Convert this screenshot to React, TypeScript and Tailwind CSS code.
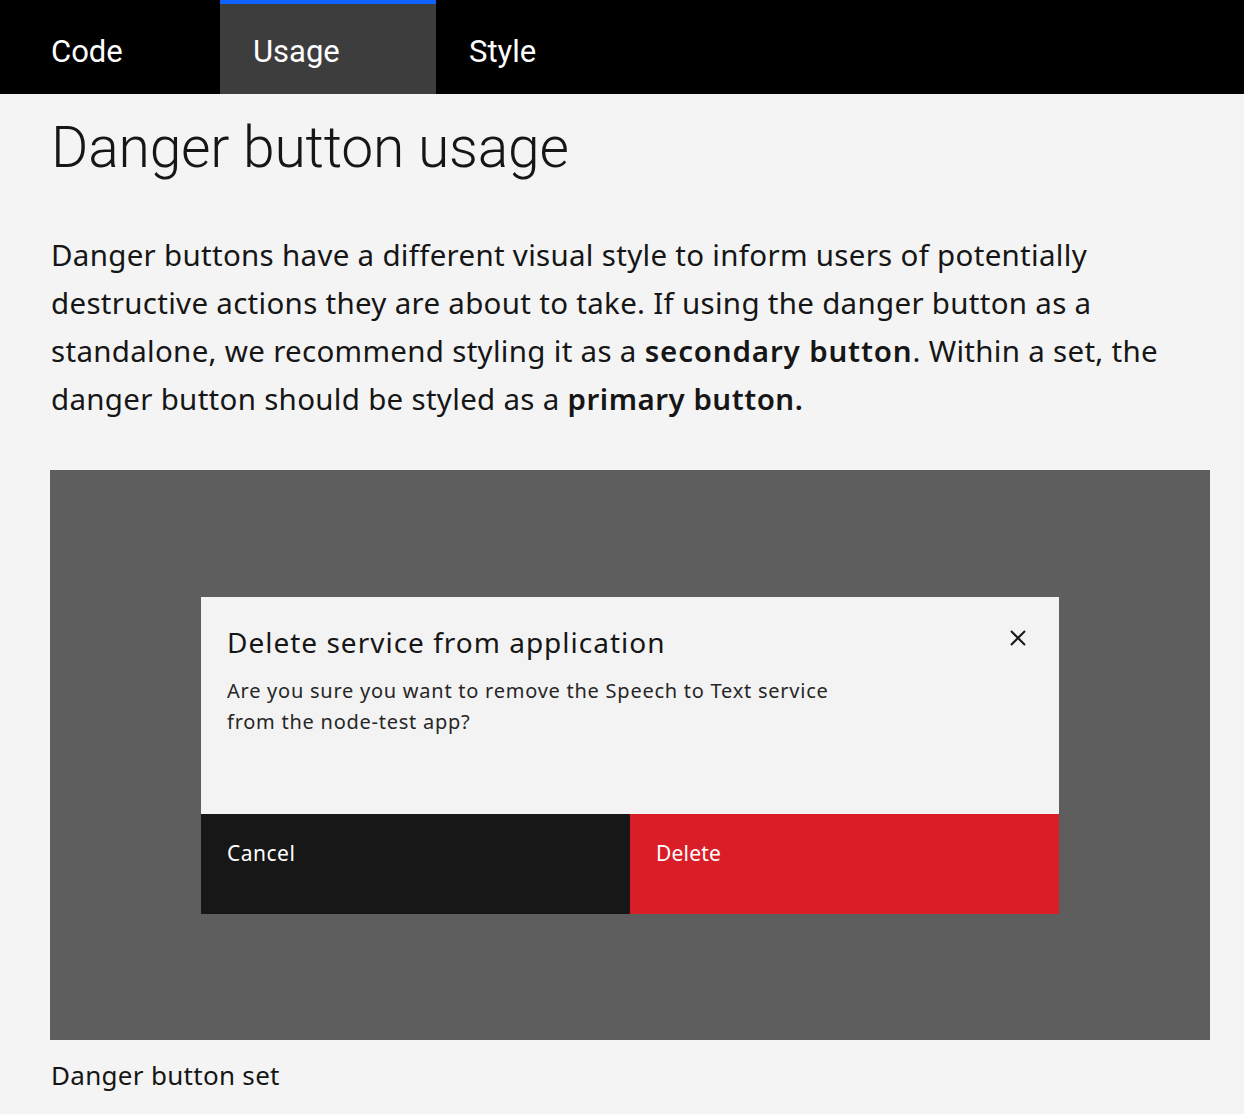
import React from "react";

const R = { fontFamily: "Roboto, 'Noto Sans', sans-serif" };
const N = { fontFamily: "'Noto Sans', Roboto, sans-serif" };

export default function App() {
  return (
    <div className="min-h-[1114px] bg-[#f4f4f4] text-[#161616]" style={R}>
      <nav className="flex h-[94px] bg-black text-white">
        <div className="flex w-[220px] items-center pl-[51px] pt-[10px] text-[31px]">Code</div>
        <div className="flex w-[216px] items-center border-t-[4px] border-[#0f62fe] bg-[#3d3d3d] pl-[33px] pt-[6px] text-[31px]">Usage</div>
        <div className="flex items-center pl-[33px] pt-[10px] text-[31px]">Style</div>
      </nav>
      <main className="pl-[50px] pr-[34px]">
        <h1 className="pl-[1px] pt-[16px] text-[57px] font-light leading-[76px] tracking-[-0.2px]">Danger button usage</h1>
        <p className="mt-[45px] pl-[1px] text-[29.5px] leading-[48px] tracking-[0.3px] whitespace-nowrap" style={N}>
          Danger buttons have a different visual style to inform users of potentially
          <br />
          destructive actions they are about to take. If using the danger button as a
          <br />
          standalone, we recommend styling it as a <b className="font-semibold tracking-[0.85px]">secondary button</b>. Within a set, the
          <br />
          danger button should be styled as a <b className="font-semibold tracking-[0.5px]">primary button.</b>
        </p>
        <div className="mt-[47px] flex h-[570px] w-[1160px] items-center justify-center bg-[#5e5e5e]">
          <div className="flex h-[317px] w-[858px] flex-col bg-[#f3f3f3]" style={N}>
            <div className="relative flex-1 pl-[26px] pt-[25px]">
              <div className="text-[28px] leading-[40px] tracking-[1px]">Delete service from application</div>
              <div className="mt-[13px] text-[20px] leading-[31px] tracking-[0.75px] text-[#262626]">
                Are you sure you want to remove the Speech to Text service
                <br />
                from the node-test app?
              </div>
              <svg className="absolute right-[32px] top-[32px]" width="18" height="18" viewBox="0 0 18 18">
                <path d="M2 2 L16 16 M16 2 L2 16" stroke="#161616" strokeWidth="2" fill="none" />
              </svg>
            </div>
            <div className="flex h-[100px]">
              <div className="flex-1 bg-[#171717] pl-[26px] pt-[24px] text-[21px] leading-[30px] tracking-[0.5px] text-white">Cancel</div>
              <div className="flex-1 bg-[#da1e28] pl-[26px] pt-[24px] text-[21px] leading-[30px] tracking-[0.2px] text-white">Delete</div>
            </div>
          </div>
        </div>
        <div className="pl-[1px] pt-[17px] text-[26px] leading-[36px] tracking-[0.3px]" style={N}>Danger button set</div>
      </main>
    </div>
  );
}
